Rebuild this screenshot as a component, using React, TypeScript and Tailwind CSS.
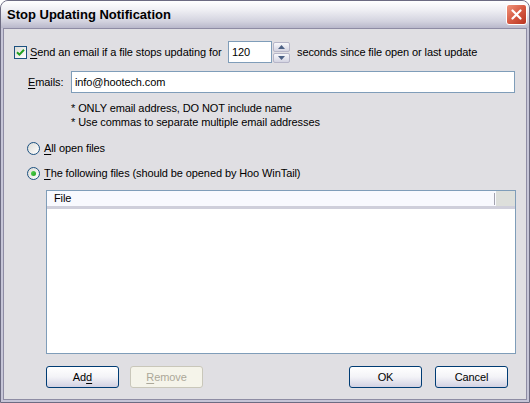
import React from 'react';

const FONT = "font-['Liberation_Sans',Arial,sans-serif]";

const CheckMark = () => (
  <svg width="9" height="9" viewBox="0 0 9 9">
    <path d="M1 4.2 L3.4 6.6 L8 1.8" fill="none" stroke="#21a121" strokeWidth="2" />
  </svg>
);

const Checkbox = ({ checked }: { checked: boolean }) => (
  <span className="flex h-[13px] w-[13px] shrink-0 items-center justify-center border border-[#1c5180] bg-gradient-to-br from-[#dcdcd7] to-white">
    {checked ? <CheckMark /> : null}
  </span>
);

const Radio = ({ checked }: { checked: boolean }) => (
  <span className="flex h-[13px] w-[13px] shrink-0 items-center justify-center rounded-full border border-[#1c5180] bg-gradient-to-br from-[#dcdcd7] to-white">
    {checked ? <span className="h-[5px] w-[5px] rounded-full bg-gradient-to-br from-[#55d751] to-[#21a121]" /> : null}
  </span>
);

const Key = ({ children }: { children: React.ReactNode }) => <span className="underline underline-offset-[2px]">{children}</span>;

const XPButton = ({ children, disabled }: { children: React.ReactNode; disabled?: boolean }) => (
  <button
    type="button"
    disabled={disabled}
    className={
      disabled
        ? 'h-[22px] w-[73px] rounded-[3px] border border-[#c9c7ba] bg-[#f5f4ea] text-[11px] text-[#aca899]'
        : 'h-[22px] w-[73px] rounded-[3px] border border-[#003c74] bg-gradient-to-b from-white via-[#f3f3f7] to-[#d2d1e2] text-[11px] text-black'
    }
  >
    {children}
  </button>
);

const SpinArrow = ({ up }: { up?: boolean }) => (
  <span className="flex h-[10px] w-[17px] items-center justify-center rounded-[2px] border border-[#b6b5c8] bg-gradient-to-b from-[#f8f8fb] to-[#d4d4e2]">
    <svg width="7" height="4" viewBox="0 0 7 4">
      <path d={up ? 'M0 4 L3.5 0 L7 4 Z' : 'M0 0 L3.5 4 L7 0 Z'} fill="#4d6185" />
    </svg>
  </span>
);

export default function App() {
  return (
    <div className={`${FONT} flex h-[403px] w-[530px] flex-col overflow-hidden rounded-t-[8px] border border-[#6c6b82] bg-[#c6c5d7] text-[11px] tracking-[-0.1px] text-black`}>
      <div className="flex h-[27px] shrink-0 items-center justify-between bg-[linear-gradient(to_bottom,#ffffff_0%,#eeeef3_35%,#d3d3df_75%,#b9b8cb_100%)] pl-[6px] pr-[2px]">
        <span className="text-[13px] font-bold tracking-normal">Stop Updating Notification</span>
        <span className="flex h-[21px] w-[21px] items-center justify-center rounded-[3px] border border-white bg-gradient-to-br from-[#f0947a] via-[#d65a43] to-[#b8321f]">
          <svg width="11" height="11" viewBox="0 0 11 11">
            <path d="M1.5 1.5 L9.5 9.5 M9.5 1.5 L1.5 9.5" stroke="white" strokeWidth="2.2" strokeLinecap="round" />
          </svg>
        </span>
      </div>
      <div className="mx-[2px] mb-[2px] flex flex-1 flex-col border border-[#8e8ca4] bg-[#e0dfe3] pl-[10px] pt-[12px]">
        <div className="flex h-[22px] items-center">
          <Checkbox checked />
          <span className="ml-[3px] w-[198px]">
            <Key>S</Key>end an email if a file stops updating for
          </span>
          <div className="flex h-[22px] w-[44px] items-center border border-[#7f9db9] bg-white pl-[3px]">120</div>
          <div className="ml-px flex flex-col gap-px">
            <SpinArrow up />
            <SpinArrow />
          </div>
          <span className="ml-[7px]">seconds since file open or last update</span>
        </div>
        <div className="mt-[8px] flex h-[22px] items-center pl-[14px]">
          <span className="w-[43px]">
            <Key>E</Key>mails:
          </span>
          <div className="flex h-[22px] w-[444px] items-center border border-[#7f9db9] bg-white pl-[3px]">info@hootech.com</div>
        </div>
        <div className="mt-[8px] flex flex-col pl-[57px] leading-[14px]">
          <span>* ONLY email address, DO NOT include name</span>
          <span>* Use commas to separate multiple email addresses</span>
        </div>
        <div className="ml-[13px] mt-[11px] flex h-[16px] items-center gap-[4px]">
          <Radio checked={false} />
          <span>
            <Key>A</Key>ll open files
          </span>
        </div>
        <div className="ml-[13px] mt-[9px] flex h-[16px] items-center gap-[4px]">
          <Radio checked />
          <span>
            <Key>T</Key>he following files (should be opened by Hoo WinTail)
          </span>
        </div>
        <div className="ml-[32px] mt-[9px] flex h-[164px] w-[470px] flex-col border border-[#7f9db9] bg-white">
          <div className="flex h-[18px] shrink-0 border-b-[3px] border-[#cfcfdb]">
            <div className="flex w-[449px] items-center bg-[#f8f9fe] pl-[7px]">
              <span className="flex-1">File</span>
              <span className="mr-px h-[12px] w-px bg-[#a3a3b0]" />
            </div>
            <div className="flex-1 bg-[#dddfdb]" />
          </div>
          <div className="flex-1" />
        </div>
        <div className="ml-[32px] mt-[12px] flex w-[462px]">
          <XPButton>
            Ad<Key>d</Key>
          </XPButton>
          <span className="ml-[11px]">
            <XPButton disabled>
              <Key>R</Key>emove
            </XPButton>
          </span>
          <span className="ml-auto">
            <XPButton>OK</XPButton>
          </span>
          <span className="ml-[13px]">
            <XPButton>Cancel</XPButton>
          </span>
        </div>
      </div>
    </div>
  );
}
